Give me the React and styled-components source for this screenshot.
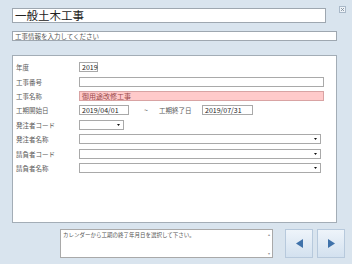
import React from 'react';
import styled, { createGlobalStyle } from 'styled-components';

const GlobalStyle = createGlobalStyle`
  html, body {
    margin: 0;
    padding: 0;
    background: #d9e4ee;
  }
  body {
    font-family: "Noto Sans CJK JP", "Noto Sans", sans-serif;
    color: #333;
  }
`;

const Screen = styled.div`
  width: 352px;
  height: 264px;
  box-sizing: border-box;
  padding: 6px 6px 0 12px;
  display: flex;
  flex-direction: column;
`;

const Header = styled.div`
  display: flex;
  align-items: flex-start;
`;

const TitleBox = styled.div`
  margin-top: 2px;
  width: 314px;
  height: 15px;
  box-sizing: border-box;
  border: 1px solid #9ea7b0;
  background: #fff;
  font-size: 11.5px;
  line-height: 13px;
  padding-left: 2px;
  color: #222;
`;

const CloseButton = styled.div`
  margin-left: 13px;
  width: 7px;
  height: 7px;
  box-sizing: border-box;
  border: 1px solid #a9b8c8;
  background: #eef3f8;
  display: flex;
  align-items: center;
  justify-content: center;
`;

const SubBox = styled.div`
  margin-top: 8px;
  width: 325px;
  height: 10px;
  box-sizing: border-box;
  border: 1px solid #9ea7b0;
  background: #fff;
  font-size: 6.5px;
  line-height: 8px;
  padding-left: 2px;
  color: #555;
  white-space: nowrap;
`;

const Panel = styled.div`
  margin-top: 14px;
  width: 325px;
  height: 168px;
  box-sizing: border-box;
  border: 1px solid #a3adb6;
  background: #fff;
  padding: 4px 0 0 3px;
  display: grid;
  grid-auto-rows: 14.4px;
  align-content: start;
`;

const Row = styled.div`
  display: flex;
  align-items: center;
`;

const Label = styled.div`
  width: ${p => p.$w || 63}px;
  font-size: 6.5px;
  color: #5a5a5a;
  white-space: nowrap;
`;

const Field = styled.div`
  width: ${p => p.$w}px;
  height: 10px;
  box-sizing: border-box;
  border: 1px solid ${p => (p.$alert ? '#d8a3a3' : '#a9a9a9')};
  background: ${p => (p.$alert ? '#ffcaca' : '#fff')};
  color: ${p => (p.$alert ? '#9a4a4a' : '#222')};
  font-size: 7px;
  line-height: 8px;
  padding: 0 2px;
  white-space: nowrap;
`;

const Combo = styled(Field)`
  display: flex;
  align-items: center;
  justify-content: flex-end;
  padding-right: 3px;
`;

const Tilde = styled.div`
  margin-left: 15px;
  width: 15px;
  font-size: 7px;
  color: #555;
`;

const Footer = styled.div`
  margin-top: 6px;
  display: flex;
  align-items: flex-start;
`;

const MessageBox = styled.div`
  margin-left: 48px;
  width: 213px;
  height: 29px;
  box-sizing: border-box;
  border: 1px solid #a9a9a9;
  background: #fff;
  display: flex;
`;

const MessageText = styled.div`
  flex: 1;
  font-size: 5.5px;
  line-height: 8px;
  padding: 1px 2px;
  color: #555;
  white-space: nowrap;
`;

const ScrollTrack = styled.div`
  width: 6px;
  display: flex;
  flex-direction: column;
  justify-content: space-between;
  align-items: center;
  padding: 2px 0;
  font-size: 4px;
  line-height: 4px;
  color: #999;
`;

const NavGroup = styled.div`
  margin-left: 12px;
  display: flex;
  gap: 4px;
`;

const NavButton = styled.div`
  width: 28px;
  height: 29px;
  box-sizing: border-box;
  border: 1px solid #b7c9dc;
  background: linear-gradient(#eef4fa, #d3e1ef);
  display: flex;
  align-items: center;
  justify-content: center;
`;

const Arrow = ({ dir }) => (
  <svg width="7" height="9" viewBox="0 0 7 9">
    {dir === 'left' ? (
      <polygon points="7,0 7,9 0,4.5" fill="#3f72aa" />
    ) : (
      <polygon points="0,0 0,9 7,4.5" fill="#3f72aa" />
    )}
  </svg>
);

const DropMark = () => (
  <svg width="3" height="2" viewBox="0 0 3 2">
    <polygon points="0,0 3,0 1.5,2" fill="#111" />
  </svg>
);

export default function App() {
  return (
    <>
      <GlobalStyle />
      <Screen>
        <Header>
          <TitleBox>一般土木工事</TitleBox>
          <CloseButton>
            <svg width="5" height="5" viewBox="0 0 5 5">
              <path d="M1 1L4 4M4 1L1 4" stroke="#7a8896" strokeWidth="0.8" />
            </svg>
          </CloseButton>
        </Header>
        <SubBox>工事情報を入力してください</SubBox>
        <Panel>
          <Row>
            <Label>年度</Label>
            <Field $w={19}>2019</Field>
          </Row>
          <Row>
            <Label>工事番号</Label>
            <Field $w={245} />
          </Row>
          <Row>
            <Label>工事名称</Label>
            <Field $w={245} $alert>御用途改修工事</Field>
          </Row>
          <Row>
            <Label>工期開始日</Label>
            <Field $w={50}>2019/04/01</Field>
            <Tilde>~</Tilde>
            <Label $w={43}>工期終了日</Label>
            <Field $w={51}>2019/07/31</Field>
          </Row>
          <Row>
            <Label>発注者コード</Label>
            <Combo $w={45}><DropMark /></Combo>
          </Row>
          <Row>
            <Label>発注者名称</Label>
            <Combo $w={242}><DropMark /></Combo>
          </Row>
          <Row>
            <Label>請負者コード</Label>
            <Combo $w={242}><DropMark /></Combo>
          </Row>
          <Row>
            <Label>請負者名称</Label>
            <Combo $w={242}><DropMark /></Combo>
          </Row>
        </Panel>
        <Footer>
          <MessageBox>
            <MessageText>カレンダーから工期の終了年月日を選択して下さい。</MessageText>
            <ScrollTrack>
              <span>▴</span>
              <span>▾</span>
            </ScrollTrack>
          </MessageBox>
          <NavGroup>
            <NavButton><Arrow dir="left" /></NavButton>
            <NavButton><Arrow dir="right" /></NavButton>
          </NavGroup>
        </Footer>
      </Screen>
    </>
  );
}
